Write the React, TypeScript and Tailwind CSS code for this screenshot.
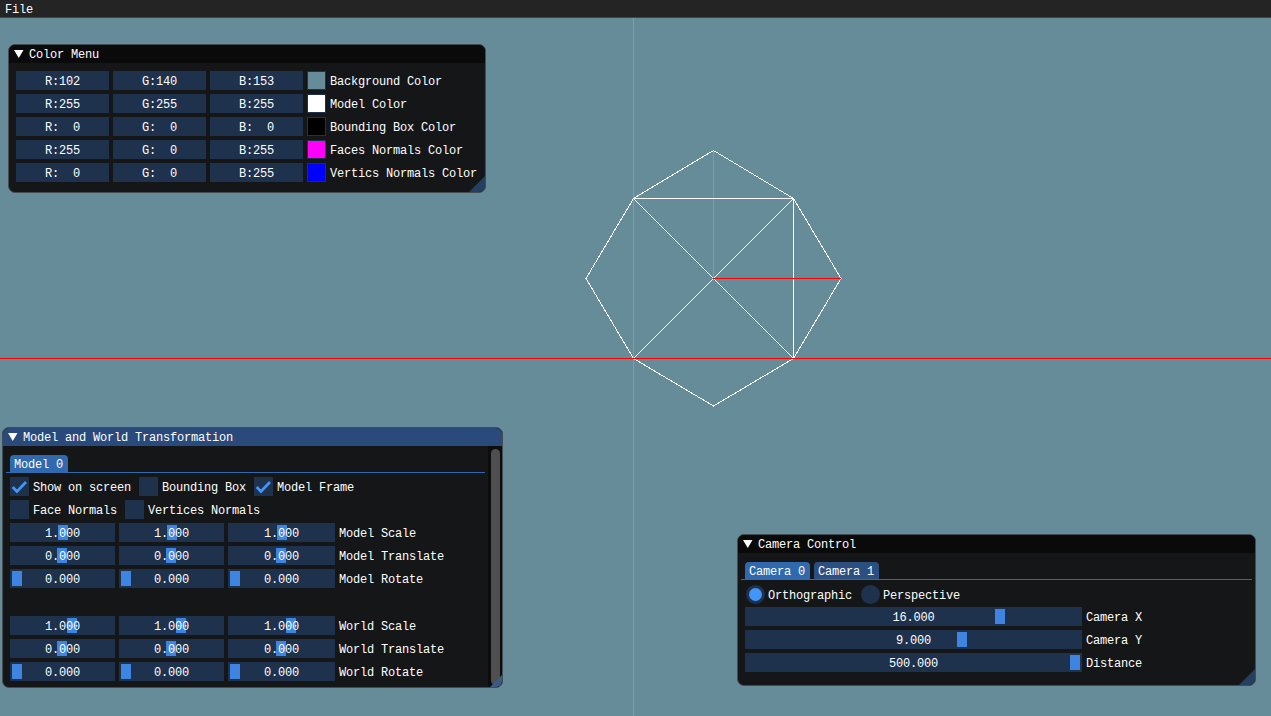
import type { ReactNode } from "react";

const COLOR_ROWS = [
  { r: "R:102", g: "G:140", b: "B:153", swatch: "bg-[#668c99]", label: "Background Color" },
  { r: "R:255", g: "G:255", b: "B:255", swatch: "bg-white", label: "Model Color" },
  { r: "R:  0", g: "G:  0", b: "B:  0", swatch: "bg-black", label: "Bounding Box Color" },
  { r: "R:255", g: "G:  0", b: "B:255", swatch: "bg-[#ff00ff]", label: "Faces Normals Color" },
  { r: "R:  0", g: "G:  0", b: "B:255", swatch: "bg-[#0000ff]", label: "Vertics Normals Color" },
];

const MODEL_ROWS = [
  { label: "Model Scale", value: "1.000", grabs: [48, 48, 49] },
  { label: "Model Translate", value: "0.000", grabs: [47, 47, 48] },
  { label: "Model Rotate", value: "0.000", grabs: [2, 2, 2] },
];

const WORLD_ROWS = [
  { label: "World Scale", value: "1.000", grabs: [57, 57, 58] },
  { label: "World Translate", value: "0.000", grabs: [47, 47, 48] },
  { label: "World Rotate", value: "0.000", grabs: [2, 2, 2] },
];

const CAMERA_ROWS = [
  { label: "Camera X", value: "16.000", grab: 250 },
  { label: "Camera Y", value: "9.000", grab: 212 },
  { label: "Distance", value: "500.000", grab: 325 },
];

function Text({ children }: { children: ReactNode }) {
  // the text sits a pixel lower than plain centring puts it
  return <span className="relative top-px whitespace-pre">{children}</span>;
}

function Grip() {
  return (
    <svg className="absolute right-0 bottom-0" width="16" height="16">
      <polygon points="16,0 16,16 0,16" fill="#25405f" />
    </svg>
  );
}

function TitleBar({ title, active }: { title: string; active?: boolean }) {
  return (
    <div className={`flex h-[18px] items-center pl-[5px] ${active ? "bg-[#294a7a]" : "bg-[#0a0a0a]"}`}>
      <svg width="10" height="8" className="mr-[5px]">
        <polygon points="0,0 9.5,0 4.75,8" fill="#fff" />
      </svg>
      <Text>{title}</Text>
    </div>
  );
}

function Slider({ value, grab, width }: { value: string; grab: number; width: string }) {
  return (
    <div className={`relative flex h-[19px] items-center justify-center bg-[#1e324e] ${width}`}>
      <div className="absolute top-[2px] h-[15px] w-[10px] bg-[#3d85e0]" style={{ left: grab }} />
      <Text>{value}</Text>
    </div>
  );
}

function Frame({ children }: { children: string }) {
  return (
    <div className="flex h-[19px] w-[93px] items-center justify-center bg-[#1e324e]">
      <Text>{children}</Text>
    </div>
  );
}

function Checkbox({ label, checked }: { label: string; checked?: boolean }) {
  return (
    <div className="flex items-center gap-1">
      <div className="h-[19px] w-[19px] bg-[#1e324e]">
        {checked && (
          <svg width="19" height="19" fill="none" stroke="#4296fa" strokeWidth="2.6">
            <polyline points="2.7,10 6.9,14.5 16,5" />
          </svg>
        )}
      </div>
      <Text>{label}</Text>
    </div>
  );
}

function Radio({ label, checked }: { label: string; checked?: boolean }) {
  return (
    <div className="flex items-center gap-[3px]">
      <div className="flex h-[19px] w-[19px] items-center justify-center rounded-full bg-[#1e324e]">
        {checked && <div className="h-[13px] w-[13px] rounded-full bg-[#4296fa]" />}
      </div>
      <Text>{label}</Text>
    </div>
  );
}

function Tab({ label, active }: { label: string; active?: boolean }) {
  return (
    <div className={`flex h-[17px] items-center rounded-t-[4px] pl-1 pr-[5px] ${active ? "bg-[#3069ad]" : "bg-[#2a4f80]"}`}>
      <Text>{label}</Text>
    </div>
  );
}

function SliderRow({ label, value, grabs }: { label: string; value: string; grabs: number[] }) {
  return (
    <div className="flex items-center gap-1">
      <Slider value={value} grab={grabs[0]} width="w-[105px]" />
      <Slider value={value} grab={grabs[1]} width="w-[105px]" />
      <Slider value={value} grab={grabs[2]} width="w-[107px]" />
      <Text>{label}</Text>
    </div>
  );
}

function Panel({ className, children }: { className: string; children: ReactNode }) {
  return (
    <div className={`absolute overflow-hidden rounded-[7px] border border-[#454b52] bg-[#151617] ${className}`}>
      {children}
    </div>
  );
}

function Scene() {
  const outline = "713.5,150.5 793.5,198.5 841,278.5 793.5,358.5 713.5,406 633.5,358.5 586,278.5 633.5,198.5";
  return (
    <svg className="absolute inset-0" width="1271" height="716" shapeRendering="crispEdges">
      <line x1="633.5" y1="18" x2="633.5" y2="716" stroke="#00ff00" />
      <line x1="713.5" y1="150" x2="713.5" y2="278" stroke="#00ff00" />
      <polygon points={outline} fill="none" stroke="#fff" />
      <path d="M633 198.5H793M793.5 198V358M633.5 198.5L793.5 358.5M793.5 198.5L633.5 358.5" fill="none" stroke="#fff" />
      <line x1="0" y1="358.5" x2="1271" y2="358.5" stroke="#ff0000" />
      <line x1="713" y1="278.5" x2="841" y2="278.5" stroke="#ff0000" />
    </svg>
  );
}

export default function App() {
  return (
    <div className="relative h-[716px] w-[1271px] overflow-hidden bg-[#668c99] font-['Liberation_Mono',monospace] text-[12px] tracking-[-0.2px] text-white">
      <Scene />

      {/* Menu bar */}
      <div className="relative flex h-[18px] items-center border-b border-[#424242] bg-[#242424] px-[5px]">
        <Text>File</Text>
      </div>

      {/* Color Menu */}
      <Panel className="left-[8px] top-[44px] h-[149px] w-[478px]">
        <TitleBar title="Color Menu" />
        <div className="flex flex-col gap-1 pl-[7px] pt-[8px]">
          {COLOR_ROWS.map((row) => (
            <div key={row.label} className="flex items-center gap-1">
              <Frame>{row.r}</Frame>
              <Frame>{row.g}</Frame>
              <Frame>{row.b}</Frame>
              <div className={`h-[19px] w-[19px] border border-[#1e324e] ${row.swatch}`} />
              <Text>{row.label}</Text>
            </div>
          ))}
        </div>
        <Grip />
      </Panel>

      {/* Model and World Transformation */}
      <Panel className="left-[2px] top-[427px] h-[261px] w-[501px]">
        <TitleBar title="Model and World Transformation" active />
        <div className="flex flex-col pl-[7px] pt-[9px]">
          <div className="-ml-1 flex w-[479px] border-b border-[#3069ad] pl-1">
            <Tab label="Model 0" active />
          </div>
          <div className="mt-1 flex flex-col gap-1">
            <div className="flex gap-2">
              <Checkbox label="Show on screen" checked />
              <Checkbox label="Bounding Box" />
              <Checkbox label="Model Frame" checked />
            </div>
            <div className="flex gap-2">
              <Checkbox label="Face Normals" />
              <Checkbox label="Vertices Normals" />
            </div>
            {MODEL_ROWS.map((row) => (
              <SliderRow key={row.label} {...row} />
            ))}
            <div className="h-5" />
            {WORLD_ROWS.map((row) => (
              <SliderRow key={row.label} {...row} />
            ))}
          </div>
        </div>
        <div className="absolute bottom-0 right-0 top-[18px] w-[14px] bg-[#0d0d0e] pb-[2px] pl-[3px] pr-[2px] pt-[3px]">
          <div className="h-full rounded-[5px] bg-[#4f4f4f]" />
        </div>
        <svg className="absolute bottom-0 right-0" width="12" height="12">
          <polygon points="12,0 12,12 0,12" fill="#3a5b86" />
        </svg>
      </Panel>

      {/* Camera Control */}
      <Panel className="left-[737px] top-[534px] h-[152px] w-[519px]">
        <TitleBar title="Camera Control" />
        <div className="flex flex-col pl-[7px] pr-[7px] pt-[9px]">
          <div className="-mx-1 flex gap-1 border-b border-[#3069ad] px-1">
            <Tab label="Camera 0" active />
            <Tab label="Camera 1" />
          </div>
          <div className="mt-[5px] flex flex-col gap-[3px]">
            <div className="flex gap-[9px] pl-px">
              <Radio label="Orthographic" checked />
              <Radio label="Perspective" />
            </div>
            <div className="flex flex-col gap-1">
              {CAMERA_ROWS.map((row) => (
                <div key={row.label} className="flex items-center gap-1">
                  <Slider value={row.value} grab={row.grab} width="w-[337px]" />
                  <Text>{row.label}</Text>
                </div>
              ))}
            </div>
          </div>
        </div>
        <Grip />
      </Panel>
    </div>
  );
}
